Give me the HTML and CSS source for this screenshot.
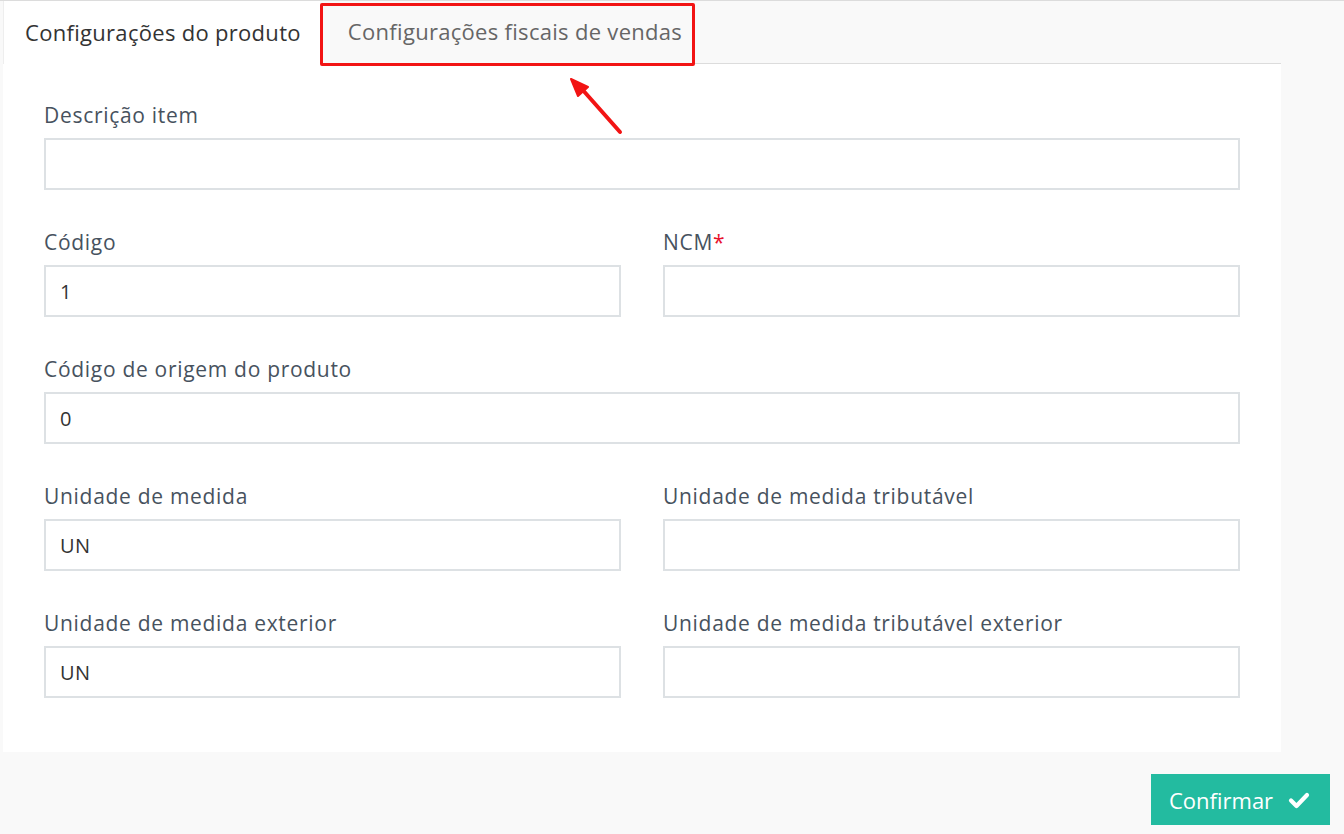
FILE: index.html
```html
<!DOCTYPE html>
<html lang="pt-BR">
<head>
    <meta charset="UTF-8">
    <meta name="viewport" content="width=device-width, initial-scale=1.0">
    <title>Configurações do produto</title>
    <link rel="stylesheet" href="styles.css">
</head>
<body>

    <div class="page">
        <div class="tabs">
            <div class="tab active">Configurações do produto</div>
            <div class="tab">Configurações fiscais de vendas</div>
        </div>

        <div class="panel">
            <div class="form">
                <div class="field full">
                    <label>Descrição item</label>
                    <input type="text" value="">
                </div>
                <div class="field">
                    <label>Código</label>
                    <input type="text" value="1">
                </div>
                <div class="field">
                    <label>NCM<span class="req">*</span></label>
                    <input type="text" value="">
                </div>
                <div class="field full">
                    <label>Código de origem do produto</label>
                    <input type="text" value="0">
                </div>
                <div class="field">
                    <label>Unidade de medida</label>
                    <input type="text" value="UN">
                </div>
                <div class="field">
                    <label>Unidade de medida tributável</label>
                    <input type="text" value="">
                </div>
                <div class="field">
                    <label>Unidade de medida exterior</label>
                    <input type="text" value="UN">
                </div>
                <div class="field">
                    <label>Unidade de medida tributável exterior</label>
                    <input type="text" value="">
                </div>
            </div>
        </div>
    </div>

    <div class="footer">
        <button class="confirm">Confirmar
            <svg class="check" width="22" height="18" viewBox="0 0 22 18"><polyline points="3,9.5 8.5,15 19,4" fill="none" stroke="#fff" stroke-width="4.2" stroke-linecap="round" stroke-linejoin="round"/></svg>
        </button>
    </div>

    <!-- annotation -->
    <div class="highlight"></div>
    <svg class="arrow" width="80" height="80" viewBox="0 0 80 80">
        <line x1="69" y1="71" x2="30" y2="27" stroke="#f21414" stroke-width="4" stroke-linecap="round"/>
        <polygon points="20,18 37,26 27,35" fill="#f21414" stroke="#f21414" stroke-width="2" stroke-linejoin="round"/>
    </svg>

</body>
</html>
```

FILE: styles.css
```css
body {
    font-family: 'Open Sans', 'Noto Sans', sans-serif;
    margin: 0;
    padding: 0;
    background-color: #f9f9f9;
    color: #47525e;
    border-top: 1px solid #dcdcdc;
}
.page {
    width: 1278px;
    margin-left: 3px;
}
.tabs {
    display: flex;
    height: 62px;
    border-bottom: 1px solid #dcdcdc;
}
.tab {
    display: flex;
    align-items: center;
    padding: 0 19px 0 21px;
    font-size: 22px;
    letter-spacing: 0.3px;
    color: #666;
    padding-bottom: 2px;
}
.tab + .tab {
    padding-left: 28px;
}
.tab.active {
    background-color: #fff;
    color: #333;
    border-left: 1px solid #eee;
    margin-bottom: -1px;
}
.panel {
    background-color: #fff;
    padding: 39px 41px 54px 41px;
}
.form {
    display: grid;
    grid-template-columns: 1fr 1fr;
    column-gap: 42px;
    row-gap: 40px;
}
.field {
    display: flex;
    flex-direction: column;
}
.field.full {
    grid-column: 1 / 3;
}
.field label {
    font-size: 21px;
    letter-spacing: 0.7px;
    line-height: 24px;
    margin-bottom: 11px;
    color: #47525e;
}
.req {
    color: #e8112d;
}
.field input {
    height: 52px;
    box-sizing: border-box;
    border: 2px solid #dde1e4;
    padding: 0 14px;
    font-family: 'Open Sans', 'Noto Sans', sans-serif;
    font-size: 20px;
    letter-spacing: 0.5px;
    color: #333;
    background: #fff;
    outline: none;
}
.footer {
    display: flex;
    justify-content: flex-end;
    padding: 22px 14px 0 0;
}
.confirm {
    display: flex;
    align-items: center;
    gap: 15px;
    height: 51px;
    width: 179px;
    padding: 0 18px;
    background-color: #23bba0;
    color: #fff;
    border: none;
    font-family: 'Open Sans', 'Noto Sans', sans-serif;
    font-size: 22px;
    cursor: pointer;
}
.highlight {
    position: absolute;
    left: 320px;
    top: 3px;
    width: 369px;
    height: 57px;
    border: 3px solid #f21414;
    border-radius: 2px;
}
.arrow {
    position: absolute;
    left: 551px;
    top: 61px;
}
```
